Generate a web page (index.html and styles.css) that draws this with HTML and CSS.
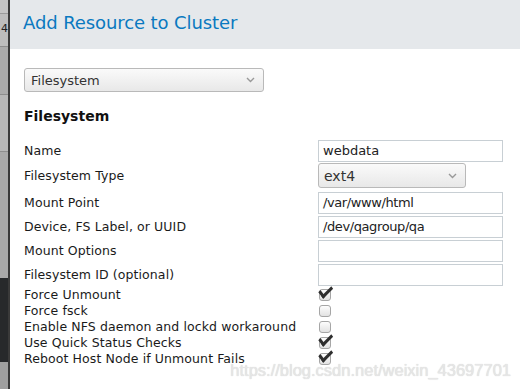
FILE: index.html
```html
<!DOCTYPE html>
<html lang="en">
<head>
    <meta charset="UTF-8">
    <title>Add Resource to Cluster</title>
    <link rel="stylesheet" href="styles.css">
</head>
<body>
    <div class="side">
        <div class="side-top"></div>
        <div class="side-seg side-num"><span>4</span></div>
        <div class="side-seg side-a"></div>
        <div class="side-seg side-b"></div>
        <div class="side-seg side-c"></div>
        <div class="side-dark"></div>
        <div class="side-end"></div>
    </div>

    <div class="panel">
        <header class="panel-header">
            <h1>Add Resource to Cluster</h1>
        </header>

        <div class="panel-body">
            <div class="select wide">
                <span>Filesystem</span>
                <svg class="chev" width="9" height="6" viewBox="0 0 9 6"><path d="M1 1l3.5 3.5L8 1" fill="none" stroke="#999" stroke-width="1.4"/></svg>
            </div>

            <h2>Filesystem</h2>

            <div class="form">
                <div class="row"><label>Name</label><div class="field">webdata</div></div>
                <div class="row row-select"><label>Filesystem Type</label>
                    <div class="select small">
                        <span>ext4</span>
                        <svg class="chev" width="9" height="6" viewBox="0 0 9 6"><path d="M1 1l3.5 3.5L8 1" fill="none" stroke="#999" stroke-width="1.4"/></svg>
                    </div>
                </div>
                <div class="row"><label>Mount Point</label><div class="field narrow">/var/www/html</div></div>
                <div class="row"><label>Device, FS Label, or UUID</label><div class="field narrow">/dev/qagroup/qa</div></div>
                <div class="row"><label>Mount Options</label><div class="field"></div></div>
                <div class="row"><label>Filesystem ID (optional)</label><div class="field"></div></div>

                <div class="check-row"><label>Force Unmount</label><span class="box checked"></span></div>
                <div class="check-row"><label>Force fsck</label><span class="box"></span></div>
                <div class="check-row"><label>Enable NFS daemon and lockd workaround</label><span class="box"></span></div>
                <div class="check-row"><label>Use Quick Status Checks</label><span class="box checked"></span></div>
                <div class="check-row"><label>Reboot Host Node if Unmount Fails</label><span class="box checked"></span></div>
            </div>
        </div>

        <div class="watermark">https://blog.csdn.net/weixin_43697701</div>
    </div>
</body>
</html>
```

FILE: styles.css
```css
* {
    margin: 0;
    padding: 0;
    box-sizing: border-box;
}

html, body {
    height: 100%;
}

body {
    display: grid;
    grid-template-columns: 8px 1fr;
    font-family: "DejaVu Sans", sans-serif;
    color: #222;
    background: #fff;
    overflow: hidden;
}

/* left strip of the window behind */
.side {
    display: flex;
    flex-direction: column;
    background: #b3b3b3;
    border-right: 2px solid #3a3a3a;
    width: 10px;
}

.side-top {
    height: 14px;
    background: #c4c4c4;
    border-bottom: 1px solid #9a9a9a;
}

.side-num {
    height: 33px;
    font-size: 11px;
    color: #222;
    display: flex;
    align-items: center;
    justify-content: flex-end;
    padding-bottom: 4px;
}

.side-seg {
    border-bottom: 1px solid #8d8d8d;
    background: #bdbdbd;
}

.side-a {
    height: 48px;
    background: #ababab;
}

.side-b {
    height: 57px;
    background: #b7b7b7;
}

.side-c {
    height: 126px;
    background: #a9a9a9;
    border-bottom: none;
}

.side-dark {
    height: 84px;
    background: #27292b;
}

.side-end {
    flex: 1;
    background: #9f9f9f;
}

.panel {
    position: relative;
    margin-left: 2px;
    display: flex;
    flex-direction: column;
}

.panel-header {
    height: 49px;
    background: #e5e8eb;
    padding: 12px 0 0 13px;
}

.panel-header h1 {
    font-size: 18px;
    font-weight: normal;
    color: #0a79c0;
    letter-spacing: -0.1px;
}

.panel-body {
    padding: 19px 0 0 14px;
}

.select {
    display: flex;
    align-items: center;
    justify-content: space-between;
    height: 24px;
    border: 1px solid #b9b9b9;
    border-radius: 3px;
    background: linear-gradient(#fafafa, #e8e8e8);
    padding: 0 8px 0 6px;
    font-size: 13px;
    color: #333;
}

.select.wide {
    width: 240px;
}

.select.small {
    width: 148px;
    height: 25px;
    font-size: 14px;
    padding-left: 5px;
}

.chev {
    display: block;
}

.panel-body h2 {
    font-size: 14px;
    font-weight: bold;
    color: #111;
    margin-top: 15px;
    line-height: 18px;
}

.form {
    margin-top: 14px;
}

.row {
    display: flex;
    align-items: center;
    height: 24px;
}

.row label,
.check-row label {
    width: 294px;
    font-size: 12.5px;
    line-height: 14px;
    color: #1a1a1a;
    letter-spacing: 0.1px;
}

.row label {
    padding-bottom: 1px;
}

.row.row-select {
    height: 28px;
    align-items: flex-start;
}

.row.row-select label {
    padding: 6px 0 0;
}

.field {
    width: 185px;
    height: 22px;
    border: 1px solid #c8cfd4;
    padding: 0 4px;
    font-size: 13px;
    line-height: 20px;
    color: #222;
    background: #fff;
}

.field.narrow {
    letter-spacing: -0.4px;
}

.check-row {
    display: flex;
    align-items: center;
    height: 16px;
}

.box {
    position: relative;
    width: 12px;
    height: 12px;
    margin-left: 1px;
    border: 1px solid #a6a6a6;
    border-radius: 3px;
    background: linear-gradient(#fdfdfd, #e2e2e2);
}

.box.checked::after {
    content: "";
    position: absolute;
    left: 1px;
    top: -2px;
    width: 11px;
    height: 5px;
    border-left: 3px solid #2e2e2e;
    border-bottom: 3px solid #2e2e2e;
    transform: rotate(-45deg) skewX(-8deg);
    transform-origin: 30% 80%;
}

.watermark {
    position: absolute;
    right: 9px;
    bottom: 9px;
    font-family: "Liberation Sans", sans-serif;
    font-size: 16.5px;
    color: #e6e6e6;
    text-shadow: 0 0 1px #cfcfcf;
}
```
